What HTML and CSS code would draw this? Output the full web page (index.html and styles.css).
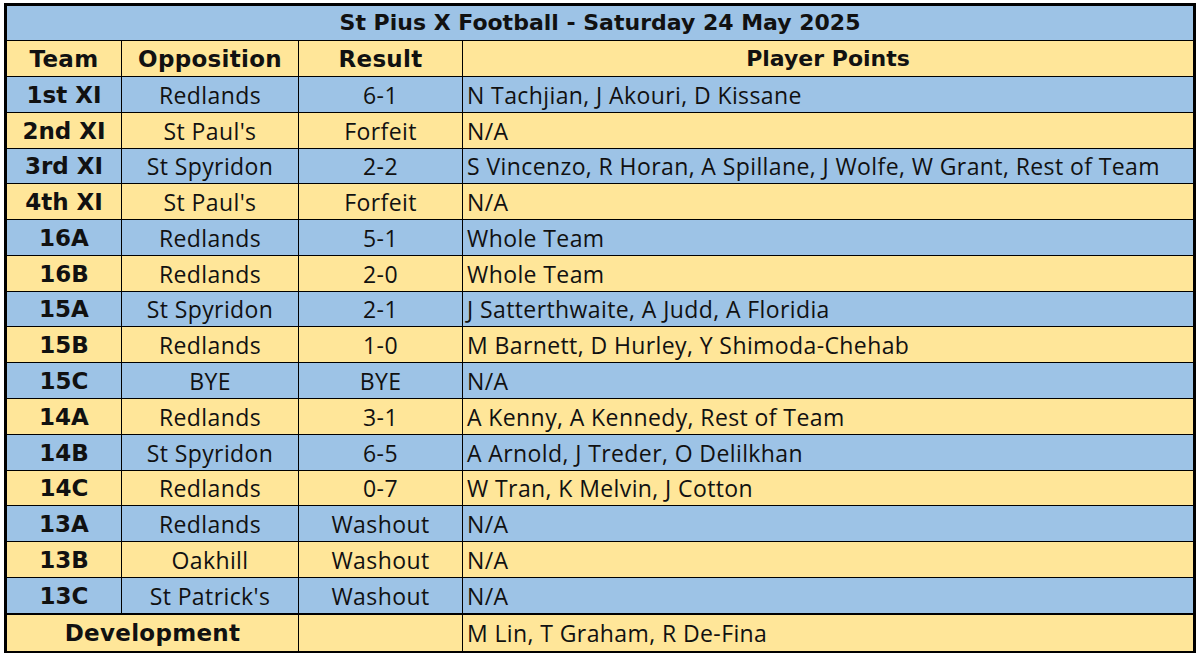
FILE: index.html
```html
<!DOCTYPE html>
<html lang="en">
<head>
<meta charset="utf-8">
<title>St Pius X Football - Saturday 24 May 2025</title>
<link rel="stylesheet" href="styles.css">
</head>
<body>
<table class="sheet">
  <colgroup>
    <col class="c-team"><col class="c-opp"><col class="c-res"><col class="c-pts">
  </colgroup>
  <tr class="title blue"><td colspan="4">St Pius X Football - Saturday 24 May 2025</td></tr>
  <tr class="head yellow"><td>Team</td><td>Opposition</td><td>Result</td><td class="center">Player Points</td></tr>
  <tr class="blue"><td class="team">1st XI</td><td>Redlands</td><td>6-1</td><td>N Tachjian, J Akouri, D Kissane</td></tr>
  <tr class="yellow"><td class="team">2nd XI</td><td>St Paul's</td><td>Forfeit</td><td>N/A</td></tr>
  <tr class="blue r35"><td class="team">3rd XI</td><td>St Spyridon</td><td>2-2</td><td>S Vincenzo, R Horan, A Spillane, J Wolfe, W Grant, Rest of Team</td></tr>
  <tr class="yellow"><td class="team">4th XI</td><td>St Paul's</td><td>Forfeit</td><td>N/A</td></tr>
  <tr class="blue"><td class="team">16A</td><td>Redlands</td><td>5-1</td><td>Whole Team</td></tr>
  <tr class="yellow"><td class="team">16B</td><td>Redlands</td><td>2-0</td><td>Whole Team</td></tr>
  <tr class="blue r35"><td class="team">15A</td><td>St Spyridon</td><td>2-1</td><td>J Satterthwaite, A Judd, A Floridia</td></tr>
  <tr class="yellow"><td class="team">15B</td><td>Redlands</td><td>1-0</td><td>M Barnett, D Hurley, Y Shimoda-Chehab</td></tr>
  <tr class="blue"><td class="team">15C</td><td>BYE</td><td>BYE</td><td>N/A</td></tr>
  <tr class="yellow"><td class="team">14A</td><td>Redlands</td><td>3-1</td><td>A Kenny, A Kennedy, Rest of Team</td></tr>
  <tr class="blue"><td class="team">14B</td><td>St Spyridon</td><td>6-5</td><td>A Arnold, J Treder, O Delilkhan</td></tr>
  <tr class="yellow r35"><td class="team">14C</td><td>Redlands</td><td>0-7</td><td>W Tran, K Melvin, J Cotton</td></tr>
  <tr class="blue"><td class="team">13A</td><td>Redlands</td><td>Washout</td><td>N/A</td></tr>
  <tr class="yellow"><td class="team">13B</td><td>Oakhill</td><td>Washout</td><td>N/A</td></tr>
  <tr class="blue thick"><td class="team">13C</td><td>St Patrick's</td><td>Washout</td><td>N/A</td></tr>
  <tr class="yellow last"><td class="team dev" colspan="2">Development</td><td></td><td>M Lin, T Graham, R De-Fina</td></tr>
</table>
</body>
</html>
```

FILE: styles.css
```css
html, body {
  margin: 0;
  padding: 0;
  background: #ffffff;
}
body {
  padding: 3px 0 0 4px;
}
.sheet {
  border-collapse: separate;
  border-spacing: 0;
  border: 3px solid #000;
  table-layout: fixed;
  width: 1192px;
  font-family: "Open Sans", "Liberation Sans", sans-serif;
  font-size: 23px;
  letter-spacing: 0.4px;
  color: #111;
}
.c-team { width: 115px; }
.c-opp { width: 177px; }
.c-res { width: 164px; }
.c-pts { width: 730px; }
.sheet td {
  box-sizing: border-box;
  height: 36px;
  padding: 1px 4px 0;
  border-right: 1px solid #000;
  border-bottom: 1px solid #000;
  text-align: center;
  vertical-align: middle;
  white-space: nowrap;
  line-height: 1;
}
.sheet td:last-child {
  border-right: none;
  text-align: left;
}
.sheet tr.r35 td { height: 35px; }
.blue td { background: #9dc3e6; }
.yellow td { background: #ffe699; }
.title td {
  height: 35px;
  padding-top: 0;
  text-align: center !important;
  font-family: "DejaVu Sans", sans-serif;
  font-weight: bold;
  font-size: 22px;
  letter-spacing: 0;
}
.head td {
  font-family: "DejaVu Sans", sans-serif;
  font-weight: bold;
  font-size: 23px;
  letter-spacing: 0.3px;
}
.team {
  font-family: "DejaVu Sans", sans-serif;
  font-weight: bold;
  font-size: 23px;
  letter-spacing: 0;
}
.team.dev {
  letter-spacing: 0.3px;
}
.head td.center { text-align: center; letter-spacing: 0; font-size: 22px; }
.thick td { border-bottom: 2px solid #000; height: 37px; }
.last td { border-bottom: none; height: 36px; }
```
